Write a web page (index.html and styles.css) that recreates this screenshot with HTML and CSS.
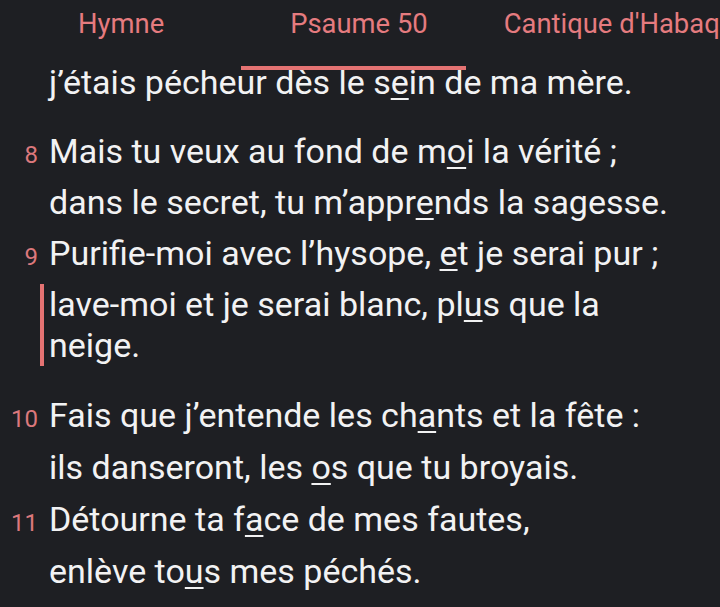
FILE: index.html
```html
<!DOCTYPE html>
<html lang="fr">
<head>
<meta charset="utf-8">
<title>Psaume 50</title>
<link rel="stylesheet" href="styles.css">
</head>
<body>
<div class="screen">
  <header class="tabbar">
    <nav class="tabs">
      <span class="tab tab-hymne">Hymne</span>
      <span class="tab tab-psaume">Psaume 50</span>
      <span class="tab tab-cantique">Cantique d'Habaquq</span>
    </nav>
    <div class="indicator"></div>
  </header>

  <main class="office">
    <section class="stanza stanza-first">
      <div class="verse">
        <span class="num"></span>
        <div class="lines">
          <p class="line">j’étais pécheur dès le s<u>e</u>in de ma mère.</p>
        </div>
      </div>
    </section>

    <section class="stanza">
      <div class="verse">
        <span class="num">8</span>
        <div class="lines">
          <p class="line">Mais tu veux au fond de m<u>o</u>i la vérité ;</p>
          <p class="line">dans le secret, tu m’appr<u>e</u>nds la sagesse.</p>
        </div>
      </div>
      <div class="verse">
        <span class="num">9</span>
        <div class="lines">
          <p class="line">Purifie-moi avec l’hysope, <u>e</u>t je serai pur ;</p>
          <p class="line current">lave-moi et je serai blanc, pl<u>u</u>s que la neige.</p>
        </div>
      </div>
    </section>

    <section class="stanza stanza-last">
      <div class="verse">
        <span class="num">10</span>
        <div class="lines">
          <p class="line">Fais que j’entende les ch<u>a</u>nts et la fête :</p>
          <p class="line">ils danseront, les <u>o</u>s que tu broyais.</p>
        </div>
      </div>
      <div class="verse">
        <span class="num">11</span>
        <div class="lines">
          <p class="line">Détourne ta f<u>a</u>ce de mes fautes,</p>
          <p class="line">enlève to<u>u</u>s mes péchés.</p>
        </div>
      </div>
    </section>
  </main>
</div>
</body>
</html>
```

FILE: styles.css
```css
html, body {
  margin: 0;
  padding: 0;
  background: #1e1f23;
}

.screen {
  position: relative;
  width: 720px;
  height: 607px;
  overflow: hidden;
  background: #1e1f23;
  font-family: Roboto, "Noto Sans", "Liberation Sans", sans-serif;
  color: #f2f2f3;
}

/* ---------- tab bar ---------- */
.tabbar {
  position: absolute;
  top: 0;
  left: 0;
  right: 0;
  height: 70px;
  background: #1e1f23;
  z-index: 2;
  overflow: hidden;
}

.tabs {
  display: flex;
  white-space: nowrap;
  padding-top: 8px;
  padding-left: 78px;
  font-size: 27.4px;
  color: #e57b7f;
}

.tab {
  flex: none;
  line-height: 32px;
}

.tab-psaume { margin-left: 126px; }
.tab-cantique { margin-left: 76px; }

.indicator {
  position: absolute;
  left: 241px;
  bottom: 0;
  width: 225px;
  height: 4px;
  background: #e57373;
}

/* ---------- psalm text ---------- */
.office {
  padding: 57px 40px 0 0;
  font-size: 34px;
}

.stanza {
  margin-bottom: 23px;
}

.stanza-first {
  margin-bottom: 18px;
}

.verse {
  display: flex;
  align-items: baseline;
}

.num {
  flex: none;
  width: 38px;
  margin-right: 11px;
  text-align: right;
  font-size: 24px;
  color: #dc787c;
}

.lines {
  flex: 1;
  min-width: 0;
}

.line {
  margin: 0;
  line-height: 51px;
}

.stanza-last .line {
  line-height: 52px;
}

.line u {
  text-decoration-thickness: 2px;
  text-underline-offset: 4px;
}

.line.current {
  margin: 5px 0 0 -9px;
  padding-left: 5px;
  border-left: 4px solid #e57373;
  line-height: 41px;
}
```
